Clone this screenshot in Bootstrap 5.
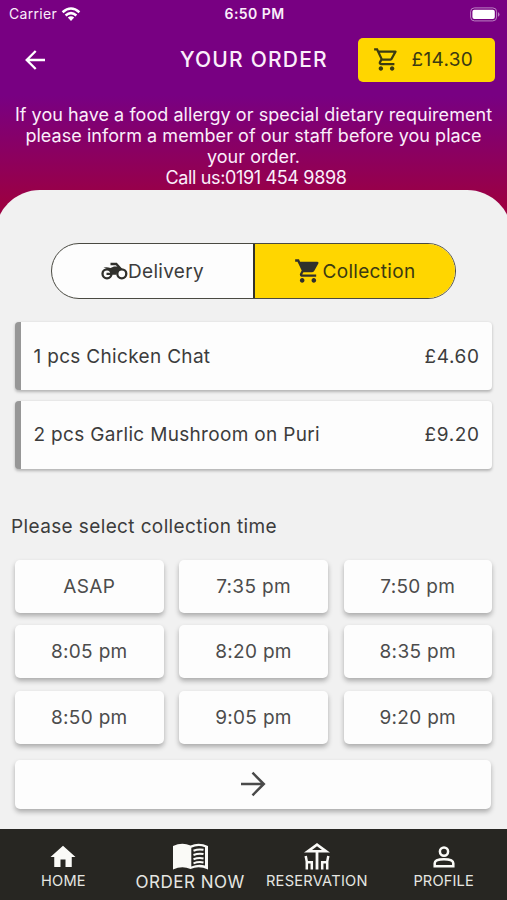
<!DOCTYPE html>
<html lang="en">
<head>
<meta charset="utf-8">
<meta name="viewport" content="width=device-width, initial-scale=1">
<title>Your Order</title>
<link href="https://cdn.jsdelivr.net/npm/bootstrap@5.3.0/dist/css/bootstrap.min.css" rel="stylesheet">
<style>
body{font-family:Inter,"Open Sans",sans-serif;background:#f1f1f1;color:#3c3c3c;height:900px;overflow:hidden;font-size:19px;line-height:1;letter-spacing:.32px;white-space:nowrap}
svg{display:block;flex:none}
.top-area{height:235px;background:linear-gradient(#780082 0,#780082 96px,#9c0042 205px,#9c0042 100%);color:#fbeefb}
.status-bar{height:28px;padding:0 7px 0 9px;font-size:14px}
.status-bar>*,.title-bar>*{flex:1 1 0}
.clock{letter-spacing:.44px;font-weight:600}
.title-bar{height:63px;padding:0 12.5px 0 23px}
.title-bar>.back{flex:0 0 157px}
.title-bar>.page-title{flex:none;font-size:21px;letter-spacing:1.2px;font-weight:500}
.total-btn{width:137px;height:44px;background:#ffd600;color:#3b3a12;border-radius:5px;padding-left:15px;gap:12px}
.notice{padding-top:14.3px;font-size:18px;letter-spacing:.05px}
.notice div{height:20.8px;line-height:20.8px}
.notice .phone{letter-spacing:-.35px;padding-left:5px}
.sheet{margin:-45px -5px 0;padding:53px 20px 0;height:639px;border-radius:45px 45px 0 0;background:#f1f1f1}
.switcher{width:405px;height:56px;border:1.5px solid #4a4a42;border-radius:28px;overflow:hidden;background:#fdfdfd}
.switcher>:first-child{width:201px}
.switcher .on{background:#ffd600;border-left:2px solid #33332c;color:#3b3a12}
.items{margin-top:23px;gap:10.5px}
.item{height:68px;background:#fdfdfd;border-left:6.5px solid #979797;border-radius:4px;box-shadow:0 1.5px 3px rgba(0,0,0,.26);padding:0 12.5px 0 12.5px}
.item .price{letter-spacing:.6px}
.hint{margin:48px 0 0 -4px;letter-spacing:.38px}
.slots{display:grid;grid-template-columns:repeat(3,148.5px);justify-content:space-between;row-gap:12.5px;margin-top:24px}
.slot{height:53px;background:#fdfdfd;border-radius:5px;box-shadow:0 3px 5px rgba(0,0,0,.29);color:#4c4c4c}
.next{height:48.5px;margin-top:16.5px;margin-right:1px}
.bottom-bar{height:71px;background:#272622;color:#e6e6e2;font-size:14.6px;padding-top:12px;letter-spacing:.15px}
.bottom-bar>div{width:25%}
.bottom-bar .glyph{height:31px;margin-bottom:1.5px}
.bottom-bar .wide{letter-spacing:.28px}
.bottom-bar .current{font-size:17px;letter-spacing:.5px}
</style>
</head>
<body>
<header class="top-area">
  <div class="status-bar d-flex align-items-center">
    <div class="d-flex align-items-center">Carrier
      <svg class="ms-1" width="20" height="15" viewBox="0 0 20 15" fill="none" stroke="#fff" stroke-width="2.5"><path d="M1.6 5.3Q10-2.2 18.400 5.300M4.600 8.500Q10 3.800 15.400 8.500"/><path d="M6.800 10.600Q10 7.900 13.200 10.600L10 14Z" fill="#fff" stroke="none"/></svg>
    </div>
    <div class="text-center clock">6:50 PM</div>
    <div class="d-flex justify-content-end"><svg width="30" height="15" viewBox="0 0 30 15"><rect x=".6" y=".9" width="26" height="13" rx="3.800" fill="none" stroke="#bb83c2"/><rect x="2.400" y="2.700" width="22.400" height="9.400" rx="2" fill="#fff"/><path d="M28 5q3 2.400 0 4.800z" fill="#bb83c2"/></svg></div>
  </div>
  <div class="title-bar d-flex align-items-center">
    <div class="back"><svg width="24" height="24" viewBox="0 0 24 24" fill="none" stroke="#fff" stroke-width="2.300"><path d="M22 12H4M12.700 3 3.700 12l9 9"/></svg></div>
    <div class="page-title">YOUR ORDER</div>
    <div class="d-flex justify-content-end"><div class="total-btn d-flex align-items-center">
      <svg width="27" height="27" viewBox="0 0 24 24" fill="currentColor"><path d="M15.550 13c.75 0 1.410-.41 1.750-1.030l3.580-6.490A.996.996 0 0 0 20.010 4H5.210l-.94-2H1v2h2l3.600 7.590-1.350 2.440C4.520 15.370 5.480 17 7 17h12v-2H7l1.100-2h7.450zM6.160 6h12.150l-2.760 5H8.530L6.160 6zM7 18c-1.100 0-1.990.9-1.990 2S5.900 22 7 22s2-.9 2-2-.9-2-2-2zm10 0c-1.100 0-1.990.9-1.990 2s.89 2 1.990 2 2-.9 2-2-.9-2-2-2z"/></svg>
      <span>£14.30</span></div></div>
  </div>
  <div class="notice text-center">
    <div>If you have a food allergy or special dietary requirement</div>
    <div>please inform a member of our staff before you place</div>
    <div>your order.</div>
    <div class="phone">Call us:0191 454 9898</div>
  </div>
</header>
<main class="sheet">
  <div class="switcher d-flex mx-auto">
    <div class="d-flex align-items-center justify-content-center">
      <svg width="27" height="18" viewBox="0 0 27 18" fill="none" stroke="#30302c" stroke-width="2.300"><circle cx="6" cy="11.800" r="4.500"/><circle cx="20.800" cy="11.800" r="4.500"/><path d="M9.500 2h5.800l5 5.500"/><path d="M2.500 5.600Q6 4.600 9.500 6L13 4.600h4.500l2.500 2.200q-4 1.800-4.600 6H10Q9.500 8 2.500 5.600zM5.500 10.800H11v2.200H5.500z" fill="#30302c" stroke="none"/></svg>
      <span>Delivery</span></div>
    <div class="on flex-fill d-flex align-items-center justify-content-center">
      <svg width="28" height="28" viewBox="0 0 24 24" fill="#30302c"><path d="M7 18c-1.100 0-1.990.9-1.990 2S5.900 22 7 22s2-.9 2-2-.9-2-2-2zM1 2v2h2l3.600 7.590-1.350 2.450c-.16.280-.25.610-.25.960 0 1.100.9 2 2 2h12v-2H7.420c-.14 0-.25-.11-.25-.25l.03-.12.900-1.630h7.450c.75 0 1.410-.41 1.750-1.030l3.580-6.490A1 1 0 0 0 20 4H5.210l-.94-2H1zm16 16c-1.100 0-1.990.9-1.990 2s.89 2 1.990 2 2-.9 2-2-.9-2-2-2z"/></svg>
      <span>Collection</span></div>
  </div>
  <div class="items d-flex flex-column">
    <div class="item d-flex align-items-center justify-content-between"><span>1 pcs Chicken Chat</span><span class="price">£4.60</span></div>
    <div class="item d-flex align-items-center justify-content-between"><span>2 pcs Garlic Mushroom on Puri</span><span class="price">£9.20</span></div>
  </div>
  <div class="hint">Please select collection time</div>
  <div class="slots">
    <div class="slot d-flex align-items-center justify-content-center">ASAP</div>
    <div class="slot d-flex align-items-center justify-content-center">7:35 pm</div>
    <div class="slot d-flex align-items-center justify-content-center">7:50 pm</div>
    <div class="slot d-flex align-items-center justify-content-center">8:05 pm</div>
    <div class="slot d-flex align-items-center justify-content-center">8:20 pm</div>
    <div class="slot d-flex align-items-center justify-content-center">8:35 pm</div>
    <div class="slot d-flex align-items-center justify-content-center">8:50 pm</div>
    <div class="slot d-flex align-items-center justify-content-center">9:05 pm</div>
    <div class="slot d-flex align-items-center justify-content-center">9:20 pm</div>
  </div>
  <div class="slot next d-flex align-items-center justify-content-center">
    <svg width="26" height="26" viewBox="0 0 26 26" fill="none" stroke="#4a4a4a" stroke-width="2.500"><path d="M1 13h22M12.500 1.700 23.800 13 12.500 24.300"/></svg>
  </div>
</main>
<nav class="bottom-bar d-flex text-center">
  <div><div class="glyph d-flex align-items-center justify-content-center"><svg width="30" height="30" viewBox="0 0 24 24" fill="#fafaf7"><path d="M10 20v-6h4v6h5v-8h3L12 3 2 12h3v8z"/></svg></div><div>HOME</div></div>
  <div class="current"><div class="glyph d-flex align-items-center justify-content-center"><svg width="35" height="27" viewBox="0 0 35 27"><path d="M0 3Q9-1.200 17.500 2.500 26-1.200 35 3v23.500Q26 22.500 17.500 26 9 22.500 0 26.500z" fill="#fafaf7"/><path d="M18.300 4.700Q25 1.800 32 4.200V22.500Q25 20.700 18.300 23.500z" fill="#272622"/><path d="M20.500 7.700q5-2 10-.9M20.500 12q5-2 10-.9M20.500 16.300q5-2 10-.9M20.500 20.400q5-2 10-.9" fill="none" stroke="#fafaf7" stroke-width="2"/></svg></div><div>ORDER NOW</div></div>
  <div class="wide"><div class="glyph d-flex align-items-center justify-content-center"><svg width="26" height="27" viewBox="0 0 26 27"><path fill-rule="evenodd" fill="#fafaf7" d="M13 0 26 9.500H14.400V26.500H11.600V9.500H0zM13 3.300 8 7h10z"/><path d="M1.700 13 2.800 18.500V26.500M2.800 19.300H7.800V26.500M24.300 13l-1.100 5.500V26.500M23.200 19.300H18.200V26.500" fill="none" stroke="#fafaf7" stroke-width="2.500"/></svg></div><div>RESERVATION</div></div>
  <div><div class="glyph d-flex align-items-center justify-content-center"><svg width="22" height="22" viewBox="0 0 22 22" fill="none" stroke="#fafaf7" stroke-width="2.500"><circle cx="11" cy="5.600" r="4.100"/><path d="M1.700 20.300v-3.100c0-5.200 18.600-5.200 18.600 0v3.100z"/></svg></div><div>PROFILE</div></div>
</nav>
</body>
</html>
